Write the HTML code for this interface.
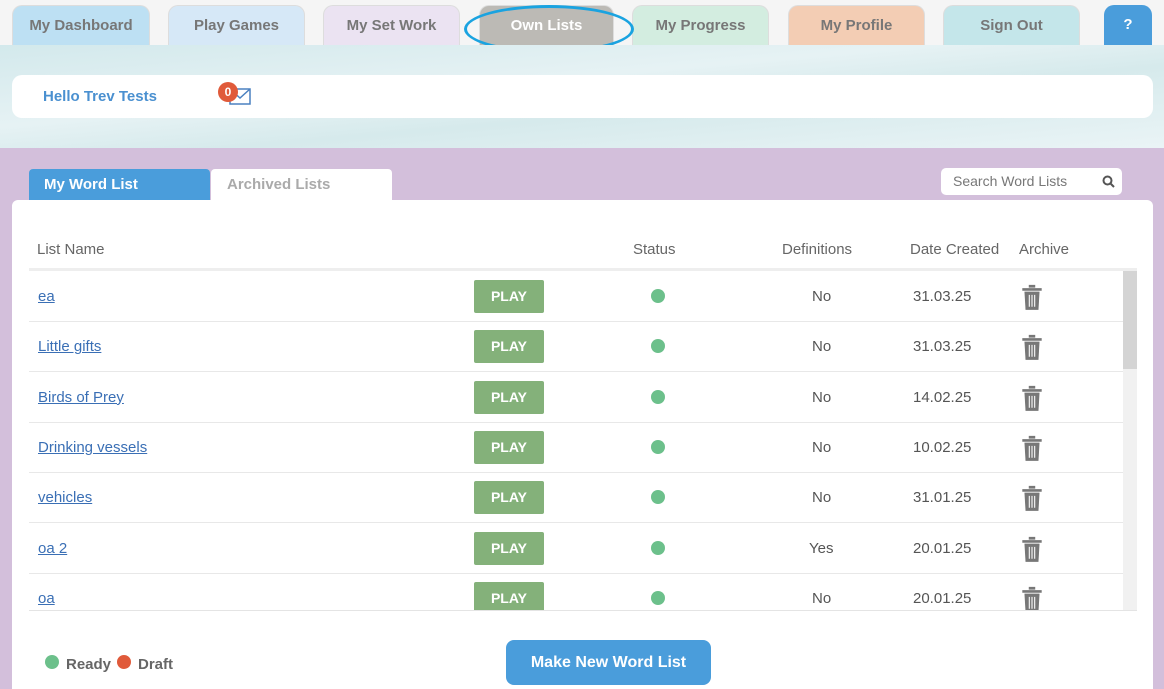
<!DOCTYPE html><html><head><style>
html,body{margin:0;width:1164px;height:689px;overflow:hidden}
body{background:#f5f5f5;font-family:"Liberation Sans",sans-serif;position:relative}
.t{position:absolute;top:5px;height:40px;border-radius:10px 10px 0 0;border:1px solid #ddd;border-bottom:none;box-sizing:border-box;text-align:center;line-height:40px;font-weight:bold;font-size:15px;color:#777}
.a{position:absolute}
.row{position:absolute;left:29px;width:1094px;height:50px;border-bottom:1px solid #e8e8e8;font-size:15px}
.row .n{position:absolute;left:9px;top:17px;color:#3a6fb5;text-decoration:underline}
.row .p{position:absolute;left:445px;top:9px;width:70px;height:33px;background:#84b17a;color:#fff;font-weight:bold;font-size:14px;text-align:center;line-height:33px;border-radius:2px}
.row .s{position:absolute;left:622px;top:18px;width:14px;height:14px;border-radius:50%;background:#6cc08b}
.row .d{position:absolute;left:783px;top:17px;color:#555}
.row .dt{position:absolute;left:884px;top:17px;color:#555}
.row svg{position:absolute;left:991px;top:12px}
</style></head><body>
<div class="t" style="left:12px;width:138px;background:#bde0f3">My Dashboard</div>
<div class="t" style="left:168px;width:137px;background:#d6e8f7">Play Games</div>
<div class="t" style="left:323px;width:137px;background:#ebe3f2">My Set Work</div>
<div class="t" style="left:479px;width:135px;background:#bcbab5;color:#fff">Own Lists</div>
<div class="t" style="left:632px;width:137px;background:#d3ede0">My Progress</div>
<div class="t" style="left:788px;width:137px;background:#f3cdb4">My Profile</div>
<div class="t" style="left:943px;width:137px;background:#c4e6ea">Sign Out</div>
<div class="t" style="left:1104px;width:48px;background:#4a9ddb;color:#fff;border:none">?</div>
<div class="a" style="left:464px;top:5px;width:170px;height:48px;border:3px solid #1aa3e0;border-radius:50%;box-sizing:border-box"></div>
<div class="a" style="left:0;top:45px;width:1164px;height:103px;background:linear-gradient(175deg,#d3e9ec 0%,#e6f2f4 40%,#d6eaec 60%,#eaf4f6 100%)"></div>
<div class="a" style="left:12px;top:75px;width:1141px;height:43px;background:#fff;border-radius:10px"></div>
<div class="a" style="left:43px;top:88px;color:#4a90d0;font-weight:bold;font-size:15px">Hello Trev Tests</div>
<svg class="a" style="left:229px;top:88px" width="22" height="17"><rect x="1" y="1" width="20" height="15" fill="none" stroke="#4a80c0" stroke-width="1.5"/><path d="M1 1l10 9 10-9" fill="none" stroke="#4a80c0" stroke-width="1.5"/></svg>
<div class="a" style="left:218px;top:82px;width:20px;height:20px;border-radius:50%;background:#e05a3a;color:#fff;font-size:12px;font-weight:bold;text-align:center;line-height:20px">0</div>
<div class="a" style="left:0;top:148px;width:1164px;height:541px;background:#d3bfdb"></div>
<div class="a" style="left:29px;top:169px;width:181px;height:31px;background:#4a9ddb;color:#fff;font-weight:bold;font-size:15px;line-height:31px;padding-left:15px;box-sizing:border-box;border-radius:4px 4px 0 0">My Word List</div>
<div class="a" style="left:211px;top:169px;width:181px;height:31px;background:#fff;color:#aaa;font-weight:bold;font-size:15px;line-height:32px;padding-left:16px;box-sizing:border-box;border-radius:4px 4px 0 0">Archived Lists</div>
<div class="a" style="left:941px;top:168px;width:181px;height:27px;background:#fff;border-radius:5px;color:#777;font-size:14px;line-height:27px;padding-left:12px;box-sizing:border-box">Search Word Lists</div>
<svg class="a" style="left:1102px;top:175px" width="13" height="13"><circle cx="5.5" cy="5.5" r="4" fill="none" stroke="#555" stroke-width="2"/><path d="M8.5 8.5l3.5 3.5" stroke="#555" stroke-width="2"/></svg>
<div class="a" style="left:12px;top:200px;width:1141px;height:489px;background:#fff;border-radius:6px 6px 0 0"></div>
<div class="a" style="top:241px;left:37px;font-size:15px;color:#666">List Name</div>
<div class="a" style="top:241px;left:633px;font-size:15px;color:#666">Status</div>
<div class="a" style="top:241px;left:782px;font-size:15px;color:#666">Definitions</div>
<div class="a" style="top:241px;left:910px;font-size:15px;color:#666">Date Created</div>
<div class="a" style="top:241px;left:1019px;font-size:15px;color:#666">Archive</div>
<div class="a" style="left:29px;top:268px;width:1108px;height:3px;background:#eee"></div>
<div class="a" style="left:29px;top:271px;width:1108px;height:339px;overflow:hidden;border-bottom:1px solid #e4e4e4">
<div class="a" style="left:1094px;top:0;width:14px;height:339px;background:#f1f1f1"></div>
<div class="a" style="left:1094px;top:0;width:14px;height:98px;background:#d4d4d4"></div>
</div>
<div class="a" style="left:0;top:271px;width:1164px;height:339px;overflow:hidden">
<script>
var d=[["ea","No","31.03.25"],["Little gifts","No","31.03.25"],["Birds of Prey","No","14.02.25"],["Drinking vessels","No","10.02.25"],["vehicles","No","31.01.25"],["oa 2","Yes","20.01.25"],["oa","No","20.01.25"]];
d.forEach(function(r,i){document.write('<div class="row" style="top:'+(i*50.3)+'px"><span class="n">'+r[0]+'</span><div class="p">PLAY</div><div class="s"></div><span class="d"'+(r[1]=="Yes"?' style="left:780px"':'')+'>'+r[1]+'</span><span class="dt">'+r[2]+'</span><svg width="24" height="28" viewBox="0 0 22 26"><path d="M8 3h6M2 6h18" stroke="#777" stroke-width="2.5" fill="none"/><path d="M4 8h14l-1 17H5z" fill="#777"/><path d="M8.5 11v11M11 11v11M13.5 11v11" stroke="#fff" stroke-width="1"/></svg></div>')});
</script>
</div>
<div class="a" style="left:45px;top:655px;width:14px;height:14px;border-radius:50%;background:#6cc08b"></div>
<div class="a" style="left:66px;top:656px;font-size:15px;font-weight:bold;color:#666">Ready</div>
<div class="a" style="left:117px;top:655px;width:14px;height:14px;border-radius:50%;background:#e05a3a"></div>
<div class="a" style="left:138px;top:656px;font-size:15px;font-weight:bold;color:#666">Draft</div>
<div class="a" style="left:506px;top:640px;width:205px;height:45px;background:#4a9ddb;border-radius:8px;color:#fff;font-weight:bold;font-size:16px;text-align:center;line-height:45px">Make New Word List</div>
</body></html>
